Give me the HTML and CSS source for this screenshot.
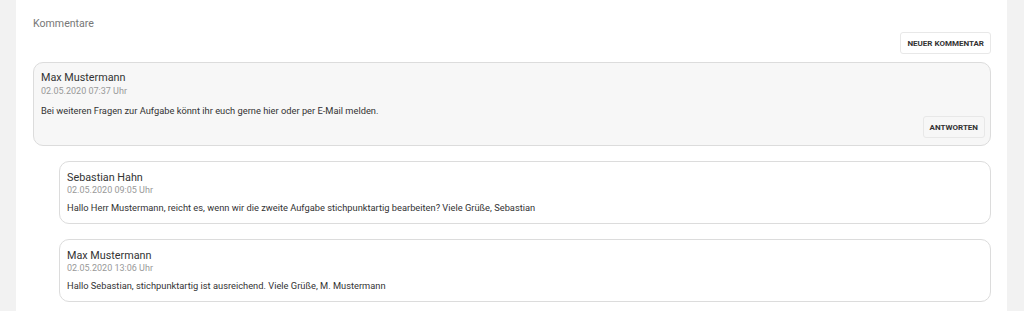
FILE: index.html
```html
<!DOCTYPE html>
<html lang="de">
<head>
  <meta charset="UTF-8">
  <title>Kommentare</title>
  <link rel="stylesheet" href="styles.css">
</head>
<body>
<div class="page">
  <div class="panel">
    <div class="title">Kommentare</div>
    <div class="toolbar">
      <div class="btn">Neuer Kommentar</div>
    </div>
    <div class="comment main">
      <div class="author">Max Mustermann</div>
      <div class="date">02.05.2020 07:37 Uhr</div>
      <div class="text">Bei weiteren Fragen zur Aufgabe könnt ihr euch gerne hier oder per E-Mail melden.</div>
      <div class="actions">
        <div class="btn grey">Antworten</div>
      </div>
    </div>
    <div class="replies">
      <div class="comment">
        <div class="author">Sebastian Hahn</div>
        <div class="date">02.05.2020 09:05 Uhr</div>
        <div class="text">Hallo Herr Mustermann, reicht es, wenn wir die zweite Aufgabe stichpunktartig bearbeiten? Viele Grüße, Sebastian</div>
      </div>
      <div class="comment">
        <div class="author">Max Mustermann</div>
        <div class="date">02.05.2020 13:06 Uhr</div>
        <div class="text">Hallo Sebastian, stichpunktartig ist ausreichend. Viele Grüße, M. Mustermann</div>
      </div>
    </div>
  </div>
</div>
</body>
</html>
```

FILE: styles.css
```css
body {
  margin: 0;
  background-color: #f2f2f2;
  font-family: Roboto, 'Liberation Sans', sans-serif;
  color: #333;
}

.page {
  padding: 0 17px 0 16px;
}

.panel {
  background-color: #fff;
  height: 311px;
  padding: 16px 16px 0 17px;
  box-sizing: border-box;
}

.title {
  font-size: 10.6px;
  color: #777;
  line-height: 15px;
}

.toolbar {
  display: flex;
  justify-content: flex-end;
  margin-top: 1px;
}

.btn {
  font-size: 8px;
  font-weight: bold;
  text-transform: uppercase;
  color: #333;
  border: 1px solid #e8e8e8;
  border-radius: 3px;
  background-color: #fff;
  padding: 6px 6px 5px;
  line-height: 9px;
}

.btn.grey {
  background-color: #f7f7f7;
}

.comment {
  border: 1px solid #dcdcdc;
  border-radius: 10px;
  background-color: #fff;
  padding: 9px 5px 9px 7px;
}

.comment.main {
  margin-top: 8px;
  background-color: #f7f7f7;
  padding-top: 8px;
  padding-bottom: 7px;
}

.author {
  font-size: 10.8px;
  line-height: 13px;
}

.main .author {
  line-height: 14px;
}

.date {
  font-size: 9px;
  color: #999;
  line-height: 12px;
}

.text {
  font-size: 9.3px;
  line-height: 12px;
  margin-top: 6px;
}

.main .text {
  margin-top: 8px;
}

.actions {
  display: flex;
  justify-content: flex-end;
  margin-top: -1px;
}

.replies {
  padding-left: 26px;
}

.replies .comment {
  margin-top: 15px;
}
```
